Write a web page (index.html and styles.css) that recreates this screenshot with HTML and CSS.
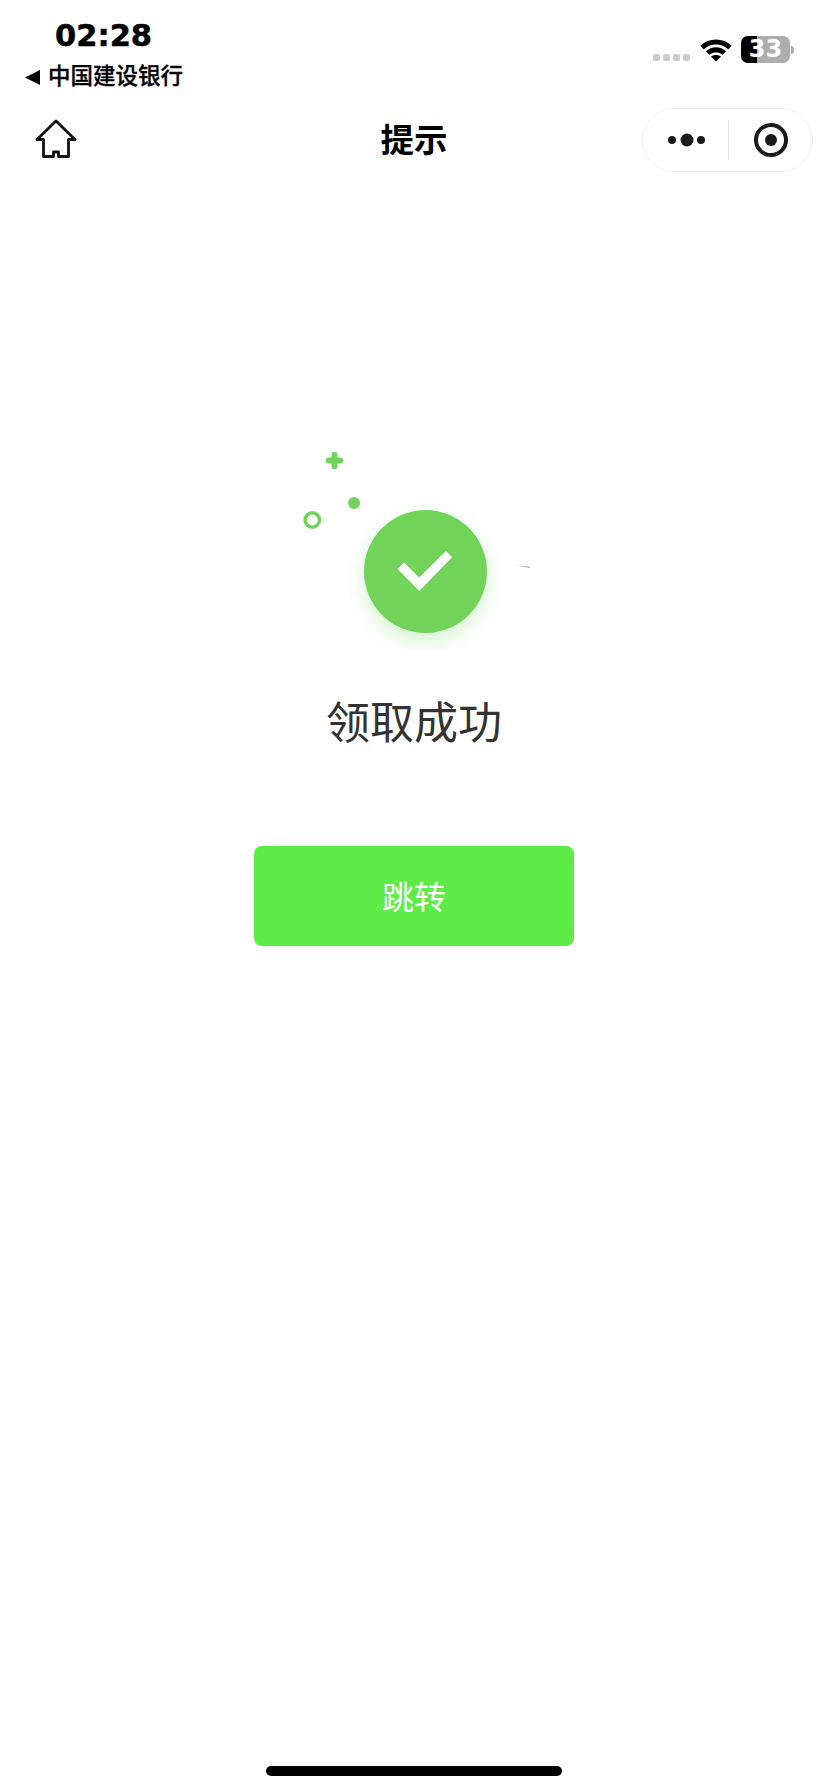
FILE: index.html
```html
<!DOCTYPE html>
<html lang="zh-CN">
<head>
<meta charset="utf-8">
<title>提示</title>
<link rel="stylesheet" href="styles.css">
</head>
<body>
<div class="page">
  <header class="status">
    <div class="status-left">
      <div class="time">02:28</div>
      <div class="carrier">
        <svg class="back" viewBox="0 0 15 15"><path d="M0 7.500 15 0v15z"/></svg>
        <span>中国建设银行</span>
      </div>
    </div>
    <div class="status-right">
      <div class="signal"><i></i><i></i><i></i><i></i></div>
      <svg class="wifi" viewBox="0 0 32 25">
        <path class="wifi-arc" d="M2 10.500C10 3 22 3 30 10.500"/>
        <path class="wifi-arc" d="M7.500 16C12.500 11.500 19.500 11.500 24.500 16"/>
        <path class="wifi-dot" d="M11 19.500C14 17.500 18 17.500 21 19.500L16 24.500z"/>
      </svg>
      <div class="battery">
        <div class="battery-body"><div class="battery-fill"></div><span class="battery-num">33</span></div>
        <div class="battery-nub"></div>
      </div>
    </div>
  </header>

  <nav class="nav">
    <svg class="home" viewBox="0 0 42 40"><path d="M2 20.500 21 2l19 18.500h-6.500V37.500H23.500V33h-5v4.500H8.500V20.500z"/></svg>
    <h1 class="nav-title">提示</h1>
    <div class="capsule">
      <div class="capsule-cell more">
        <svg viewBox="0 0 38 14"><circle cx="4" cy="7" r="4"/><circle cx="19" cy="7" r="6.500"/><circle cx="33" cy="7" r="4"/></svg>
      </div>
      <div class="capsule-rule"></div>
      <div class="capsule-cell target">
        <svg viewBox="0 0 36 36"><circle class="target-ring" cx="18" cy="18" r="15"/><circle cx="18" cy="18" r="6"/></svg>
      </div>
    </div>
  </nav>

  <main class="result">
    <svg class="hero" viewBox="0 0 260 200">
      <path class="plus" d="M44.700 10.500h11.600M50.500 4.700v11.600"/>
      <circle class="deco" cx="70" cy="53" r="6"/>
      <circle class="ring" cx="28.300" cy="70" r="7.200"/>
      <circle class="badge" cx="141.500" cy="121.500" r="61.500"/>
      <path class="check" d="M113.500 119 120 112.500 135.300 127.500 162 101 168 107.300 135.300 141z"/>
      <path class="sliver" d="M232 115.500 246 116.500v1.500z"/>
    </svg>
    <h2 class="result-title">领取成功</h2>
    <button class="jump" type="button">跳转</button>
  </main>

  <div class="home-bar"></div>
</div>
</body>
</html>
```
FILE: styles.css
```css
* { box-sizing: border-box; }
html, body { margin: 0; padding: 0; background: #fff; }
body { font-family: "Noto Sans CJK SC", "Noto Sans", sans-serif; color: #000; }
.page { width: 828px; height: 1792px; display: flex; flex-direction: column; overflow: hidden; }

.status { height: 108px; display: flex; justify-content: space-between; padding: 17px 34px 0 25px; }
.status-left { display: flex; flex-direction: column; }
.time { font-family: "DejaVu Sans", sans-serif; font-weight: 700; font-size: 30.500px; line-height: 38px; margin-left: 30px; -webkit-text-stroke: 0.5px #000; }
.carrier { display: flex; align-items: center; gap: 8px; font-size: 22.500px; font-weight: 500; line-height: 30px; margin-top: 4px; -webkit-text-stroke: 0.3px #000; }
.back { width: 15px; height: 15px; flex: none; fill: #000; margin-top: 6px; }
.status-right { display: flex; align-items: flex-start; padding-top: 19px; }
.signal { display: flex; gap: 3px; margin: 18px 10px 0 0; }
.signal i { width: 7px; height: 7px; border-radius: 2px; background: #ccc; }
.wifi { width: 32px; height: 25px; margin-top: 1px; }
.wifi-arc { fill: none; stroke: #000; stroke-width: 5; }
.wifi-dot { fill: #000; }
.battery { display: flex; align-items: center; margin-left: 9px; }
.battery-body { position: relative; width: 49px; height: 27px; border-radius: 7px; background: #adadad; display: flex; align-items: center; justify-content: center; }
.battery-fill { position: absolute; left: 0; top: 0; bottom: 0; width: 16px; border-radius: 7px 0 0 7px; background: #000; }
.battery-num { position: relative; color: #fff; font-family: "DejaVu Sans", sans-serif; font-weight: 700; font-size: 24px; line-height: 27px; }
.battery-nub { width: 3px; height: 8px; margin-left: 1px; border-radius: 0 3px 3px 0; background: #adadad; }

.nav { height: 64px; position: relative; display: flex; align-items: center; justify-content: space-between; padding: 0 15px 0 35px; }
.home { width: 42px; height: 40px; fill: none; stroke: #111; stroke-width: 2.800; stroke-linejoin: round; margin-top: -2px; }
.nav-title { position: absolute; left: 0; right: 0; margin: -5px 0 0; text-align: center; font-size: 33.500px; font-weight: 700; line-height: 46px; }
.capsule { width: 171px; height: 64px; border: 1px solid #eee; border-radius: 32px; display: flex; align-items: center; background: #fff; position: relative; }
.capsule-cell { display: flex; align-items: center; justify-content: center; fill: #1a1a1a; }
.more { width: 85px; padding-left: 2px; }
.more svg { width: 38px; height: 14px; }
.capsule-rule { width: 1px; height: 40px; background: #e2e2e2; }
.target { flex: 1; }
.target svg { width: 36px; height: 36px; margin-left: 1px; }
.target-ring { fill: none; stroke: #1a1a1a; stroke-width: 4; }

.result { display: flex; flex-direction: column; align-items: center; padding-top: 278px; }
.hero { width: 260px; height: 200px; display: block; }
.plus { fill: none; stroke: #72d35a; stroke-width: 6; stroke-linecap: round; }
.deco { fill: #72d35a; }
.ring { fill: none; stroke: #72d35a; stroke-width: 3.500; }
.badge { fill: #72d35a; filter: drop-shadow(0 8px 10px rgba(114, 211, 90, 0.3)); }
.check { fill: #fff; }
.sliver { fill: #b5b5b5; }
.result-title { margin: 39px 0 0; font-size: 44px; font-weight: 400; line-height: 62px; color: #333; }
.jump { margin-top: 95px; width: 320px; height: 100px; border: 0; border-radius: 8px; background: #5deb47; color: #fff; font-family: inherit; font-size: 32px; padding: 0 0 2px; }

.home-bar { width: 296px; height: 10px; border-radius: 5px; background: #000; margin: auto 0 16px 266px; }
```
